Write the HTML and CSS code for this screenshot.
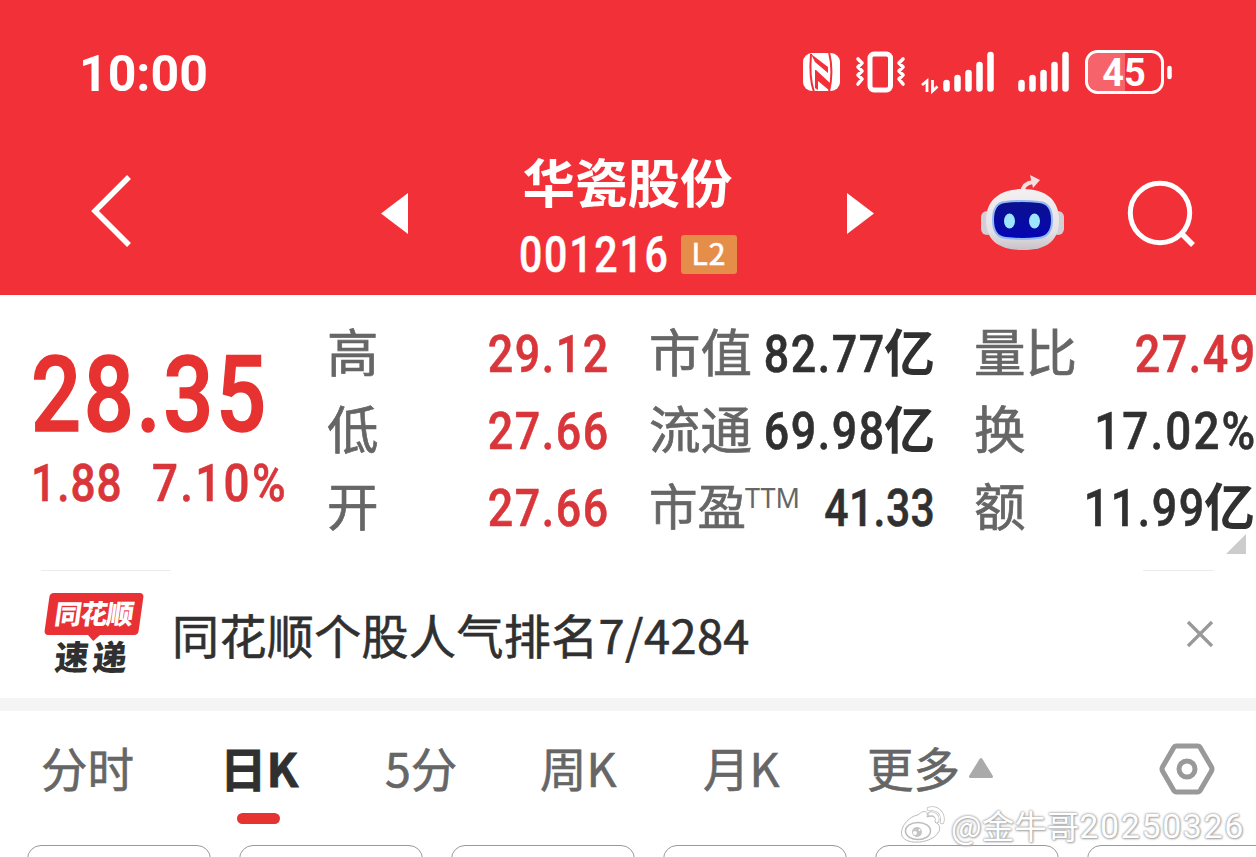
FILE: index.html
```
<!DOCTYPE html>
<html lang="zh-CN">
<head>
    <meta charset="UTF-8">
    <meta name="viewport" content="width=device-width, initial-scale=1.0">
    <title>华瓷股份 001216</title>
    <link rel="stylesheet" href="styles.css">
</head>
<body>
    <div class="header">
        <div class="status-bar">
            <span class="time">10:00</span>
            <svg class="status-icons" width="376" height="50" viewBox="800 48 376 50">
                <!-- nfc -->
                <rect x="803" y="53" width="37" height="38" rx="9" fill="#fff"/>
                <path d="M811 54c-1 12-1 27 3 38M829 52c3 12 3 27 0 40" fill="none" stroke="#f23038" stroke-width="2"/>
                <path d="M811 54l17 13v6l-13-11zM816 70l14 13v8l-12-10v9l-3-2V70z" fill="#f23038"/>
                <!-- vibrate -->
                <rect x="870" y="54" width="20.500" height="36" rx="4" fill="none" stroke="#fff" stroke-width="5"/>
                <path d="M858 59l4 4-4 4 4 4-4 4 4 4-4 5M903 59l-4 4 4 4-4 4 4 4-4 4 4 5" fill="none" stroke="#fff" stroke-width="3.600" stroke-linecap="round" stroke-linejoin="round"/>
                <!-- data + signal -->
                <path d="M922 85l5-4v11M932.500 80v11l5-4.500" fill="none" stroke="#fff" stroke-width="2.800"/>
                <path d="M946.500 83v5.500M957.500 78v10.500M968.500 73v15.500M979.500 65v23.500M990.500 55v33.500" stroke="#fff" stroke-width="6.500" stroke-linecap="round"/>
                <path d="M1021.500 83v5.500M1032.500 78v10.500M1043.500 73v15.500M1054.500 65v23.500M1065.500 55v33.500" stroke="#fff" stroke-width="6.500" stroke-linecap="round"/>
                <!-- battery -->
                <path d="M1125 53h-25q-12 0-12 12v14q0 12 12 12h25z" fill="#f6636b"/>
                <rect x="1086.500" y="51.500" width="76" height="41" rx="11" fill="none" stroke="#fff" stroke-width="3"/>
                <path d="M1169.500 68v9" stroke="#fff" stroke-width="4.500" stroke-linecap="round"/>
                <text class="battery-text" x="1124" y="86" text-anchor="middle">45</text>
            </svg>
        </div>

        <div class="nav">
            <svg class="back" width="42" height="74" viewBox="0 0 42 74"><path d="M39 3L5 37l34 34" fill="none" stroke="#fff" stroke-width="5.500"/></svg>
            <svg class="prev" width="27" height="42" viewBox="0 0 27 42"><path d="M27 0v41L0 20.500z" fill="#fff"/></svg>
            <div class="stock">
                <div class="stock-name">华瓷股份</div>
                <div class="stock-code"><span class="code">001216</span><span class="level">L2</span></div>
            </div>
            <svg class="next" width="27" height="42" viewBox="0 0 27 42"><path d="M0 0v41l27-20.500z" fill="#fff"/></svg>
            <svg class="robot" width="86" height="78" viewBox="0 0 86 78">
                <defs>
                    <linearGradient id="shell" x1="0" y1="0" x2="0" y2="1">
                        <stop offset="0" stop-color="#f4f0f1"/>
                        <stop offset=".7" stop-color="#e5e2e5"/>
                        <stop offset="1" stop-color="#c6c2c8"/>
                    </linearGradient>
                    <linearGradient id="face" x1="0" y1="0" x2="0" y2="1">
                        <stop offset="0" stop-color="#0a128c"/>
                        <stop offset="1" stop-color="#0505b4"/>
                    </linearGradient>
                </defs>
                <path d="M42 18q1-10 11-11" fill="none" stroke="#f4dfe1" stroke-width="4"/>
                <path d="M50 0l10 5-7 8z" fill="#f4dfe1"/>
                <rect x="1" y="36" width="12" height="24" rx="6" fill="#d2cfd6"/>
                <rect x="72" y="36" width="12" height="24" rx="6" fill="#d2cfd6"/>
                <path d="M43 14C66 14 79 25 79 45S68 75 43 75 6 65 6 45s14-31 37-31z" fill="url(#shell)"/>
                <path d="M25 27q17-2 34 0 13 1 13 18T58 63q-16 2-32 0-13-1-13-18t12-18z" fill="url(#face)" stroke="#92b8f5" stroke-width="2"/>
                <ellipse cx="29.500" cy="46" rx="5.500" ry="7.500" fill="#9de5ff"/>
                <ellipse cx="54.500" cy="46" rx="5.500" ry="7.500" fill="#9de5ff"/>
            </svg>
            <svg class="search" width="70" height="70" viewBox="0 0 70 70"><circle cx="33" cy="33" r="29.700" fill="none" stroke="#fff" stroke-width="5"/><path d="M54 53l12 12" stroke="#fff" stroke-width="5.500"/></svg>
        </div>
    </div>

    <div class="quote">
        <div class="price-box">
            <div class="price"><span>28.35</span></div>
            <div class="change"><span class="amount">1.88</span><span class="percent">7.10%</span></div>
        </div>
        <div class="stats">
            <div class="stat"><span class="label">高</span><span class="num red">29.12</span></div>
            <div class="stat"><span class="label">市值</span><span class="num">82.77</span><span class="unit">亿</span></div>
            <div class="stat"><span class="label">量比</span><span class="num red">27.49</span></div>
            <div class="stat"><span class="label">低</span><span class="num red">27.66</span></div>
            <div class="stat"><span class="label">流通</span><span class="num">69.98</span><span class="unit">亿</span></div>
            <div class="stat"><span class="label">换</span><span class="num wide">17.02%</span></div>
            <div class="stat"><span class="label">开</span><span class="num red">27.66</span></div>
            <div class="stat"><span class="label pe">市盈<sup>TTM</sup></span><span class="num slim">41.33</span></div>
            <div class="stat"><span class="label">额</span><span class="num">11.99</span><span class="unit">亿</span></div>
        </div>
        <div class="corner"></div>
    </div>

    <div class="notice">
        <div class="logo">
            <div class="logo-top">同花顺</div>
            <div class="logo-bottom">速递</div>
        </div>
        <div class="notice-text">同花顺个股人气排名7/4284</div>
        <svg class="close" width="28" height="28" viewBox="0 0 28 28"><path d="M2 2l24 24M26 2L2 26" stroke="#999" stroke-width="3.200"/></svg>
    </div>

    <div class="chart-area">
        <div class="tabs">
            <div class="tab">分时</div>
            <div class="tab active">日K</div>
            <div class="tab">5分</div>
            <div class="tab">周K</div>
            <div class="tab">月K</div>
            <div class="tab more">更多<svg width="26" height="22" viewBox="0 0 26 22"><path d="M13 2.500L2.500 19.500h21z" fill="#aaa" stroke="#aaa" stroke-width="3" stroke-linejoin="round"/></svg></div>
            <svg class="settings" width="56" height="52" viewBox="0 0 56 52"><path d="M17.500 3h21q2 0 3 2l11 19q1 2 0 4l-11 19q-1 2-3 2h-21q-2 0-3-2l-11-19q-1-2 0-4l11-19q1-2 3-2z" fill="none" stroke="#999" stroke-width="5"/><circle cx="28" cy="26" r="8" fill="none" stroke="#999" stroke-width="5"/></svg>
        </div>
        <div class="cards">
            <div class="card"></div>
            <div class="card"></div>
            <div class="card"></div>
            <div class="card"></div>
            <div class="card"></div>
            <div class="card"></div>
        </div>
    </div>

    <div class="watermark">
        <svg width="46" height="40" viewBox="0 0 46 40">
            <path d="M18 9c5-5 11-5 9 2 6-2 10 0 8 5 5 2 6 7 3 11-6 10-31 13-36 3C-1 22 9 10 18 9z" fill="#fff" stroke="#bbb"/>
            <ellipse cx="18" cy="25" rx="12.500" ry="8.500" fill="#fff" stroke="#bbb" stroke-width="1.500"/>
            <circle cx="17" cy="26" r="5" fill="#c4c4c4"/>
            <circle cx="15" cy="27" r="2" fill="#fff"/><circle cx="19.500" cy="24" r="1" fill="#fff"/>
            <path d="M29 3c9-2 15 5 13 13M30 8c5-1 8 3 7 7" fill="none" stroke="#bbb" stroke-width="4.500" stroke-linecap="round"/>
            <path d="M29 3c9-2 15 5 13 13M30 8c5-1 8 3 7 7" fill="none" stroke="#fff" stroke-width="3" stroke-linecap="round"/>
        </svg>
        <span class="wm-name">@金牛哥</span><span class="wm-num">20250326</span>
    </div>
</body>
</html>
```
FILE: styles.css
```
* { box-sizing: border-box; }
body { font-family: "Noto Sans CJK SC", sans-serif; margin: 0; width: 1256px; height: 857px; overflow: hidden; background: #fff; color: #303030; position: relative; }
svg { display: block; flex: none; }

.header { background: #f23038; color: #fff; height: 295px; }
.status-bar { display: flex; justify-content: space-between; align-items: flex-start; height: 132px; padding: 48px 80px 0 79px; }
.time { font: 700 50px/52px Roboto, sans-serif; }
.battery-text { font: 700 38px Roboto, sans-serif; fill: #fff; }

.nav { display: flex; align-items: flex-start; height: 163px; padding-left: 90px; }
.back { margin-top: 42px; }
.prev { margin: 61px 0 0 249px; }
.stock { width: 439px; padding-top: 15px; text-align: center; }
.stock-name { font-size: 52.5px; line-height: 66px; font-weight: 700; }
.stock-code { display: flex; align-items: center; padding-left: 111px; margin-top: 21px; height: 40px; }
.code { font: 500 50px/40px Roboto, sans-serif; letter-spacing: 2.2px; transform: scaleX(.82); transform-origin: left; width: 162px; padding-top: 2px; text-align: left; -webkit-text-stroke: .5px #fff; }
.level { width: 56px; height: 39px; border-radius: 3px; background: #e58e4a; font-size: 30px; line-height: 35px; letter-spacing: 1px; -webkit-text-stroke: .7px #fff; }
.next { margin-top: 61px; }
.robot { margin: 43px 0 0 106px; }
.search { margin: 48px 0 0 61px; }

.quote { display: flex; height: 275px; padding-top: 21px; position: relative; }
.price-box { width: 328px; padding: 32px 0 0 31px; color: #e63230; white-space: nowrap; }
.price { font: 500 105px/96px Roboto, sans-serif; height: 96px; -webkit-text-stroke: 1.5px #e63230; }
.price span { display: inline-block; letter-spacing: 3px; transform: scaleX(.84); transform-origin: left; }
.change { display: flex; font: 500 52px/64px Roboto, sans-serif; height: 64px; margin-top: 8px; color: #d8363a; -webkit-text-stroke: .6px #d8363a; }
.change span { display: block; transform-origin: left; }
.amount { width: 121px; letter-spacing: 1.2px; transform: scaleX(.85); }
.percent { letter-spacing: 2.6px; transform: scaleX(.88); }
.stats { display: grid; grid-template-columns: 281px 284px 282px; column-gap: 41px; grid-auto-rows: 77px; height: 231px; }
.stat { display: flex; align-items: center; white-space: nowrap; }
.stat:nth-child(3n+2) { padding-right: 0; margin-right: -2px; }
.stat:nth-child(3n) { margin-right: 1px; }
.label { font-size: 51.5px; line-height: 70px; color: #666; margin-right: auto; margin-top: -9px; -webkit-text-stroke: .7px #666; }
.pe { font-size: 48.5px; }
.pe sup { font: 27px/30px "Noto Sans", sans-serif; vertical-align: 17px; margin-left: -1px; -webkit-text-stroke: 0; }
/* digits are narrowed towards the right edge, the negative left margin gives the freed width back */
.num { font: 500 52px/77px Roboto, sans-serif; letter-spacing: 1.8px; margin: 0 -2px 0 -24px; transform: scaleX(.86); transform-origin: right; -webkit-text-stroke: .6px; }
.num.wide { letter-spacing: 2.4px; transform: scaleX(.88); }
.num.slim { letter-spacing: .5px; transform: scaleX(.82); margin-right: 0; }
.unit { font-size: 51px; line-height: 70px; font-weight: 700; margin-top: -9px; }
.red { color: #d8363a; }
.corner { position: absolute; right: 10px; bottom: 16px; border-left: 20px solid transparent; border-bottom: 20px solid #ccc; }

.notice { display: flex; align-items: center; height: 128px; padding: 0 42px 0 44px; background: linear-gradient(#ececec, #ececec) 41px 0 / 130px 1px no-repeat, linear-gradient(#ececec, #ececec) 1143px 0 / 71px 1px no-repeat; }
.logo { width: 100px; height: 82px; font-weight: 900; text-align: center; }
.logo-top { width: 94px; height: 42px; margin-left: 3px; border-radius: 4px; background: #e83035; color: #fff; font-size: 27px; line-height: 40px; letter-spacing: -1px; transform: skewX(-8deg); position: relative; }
.logo-top:after { content: ""; position: absolute; left: 43px; top: 41px; border: 7px solid transparent; border-top: 7px solid #e83035; border-bottom: 0; }
.logo-bottom { width: 94px; font-size: 34px; line-height: 41px; letter-spacing: 4px; padding-left: 4px; transform: skewX(-5deg); }
.notice-text { font-size: 47px; line-height: 70px; margin: -1px auto 0 28px; letter-spacing: .4px; -webkit-text-stroke: .6px #303030; }

.chart-area { border-top: 13px solid #f4f4f4; height: 159px; }
.tabs { display: flex; height: 134px; padding-left: 41px; font-size: 46.500px; line-height: 70px; color: #666; -webkit-text-stroke: .6px #666; }
.tab { margin-top: 21px; width: 163px; height: 90px; white-space: nowrap; }
.tab:nth-child(1) { width: 179px; }
.tab:nth-child(2) { width: 165px; }
.tab:nth-child(3) { width: 155px; }
.tab:nth-child(5) { width: 164px; }
.tab.active { color: #303030; font-weight: 700; -webkit-text-stroke: .8px #303030; }
.tab.active:after { content: ""; display: block; width: 43px; height: 11px; border-radius: 6px; margin: 11px 0 0 17px; background: #e63230; }
.tab.more { display: flex; width: 292px; }
.tab.more svg { margin: 25px 0 0 8px; }
.settings { margin-top: 32px; }
.cards { display: flex; gap: 28px; padding-left: 27px; height: 12px; overflow: hidden; }
.card { flex: none; width: 184px; height: 60px; border: 1px solid #999; border-radius: 14px; }

.watermark { position: absolute; right: 11px; top: 805px; display: flex; align-items: center; height: 42px; color: #fff; text-shadow: 0 0 2px #999, 0 0 3px #aaa, 1px 1px 2px #bbb; white-space: nowrap; }
.wm-name { font-size: 32.5px; line-height: 42px; margin: -2px 0 0 5px; }
.wm-num { font: 34px/42px Roboto, sans-serif; letter-spacing: 1.6px; }
```
